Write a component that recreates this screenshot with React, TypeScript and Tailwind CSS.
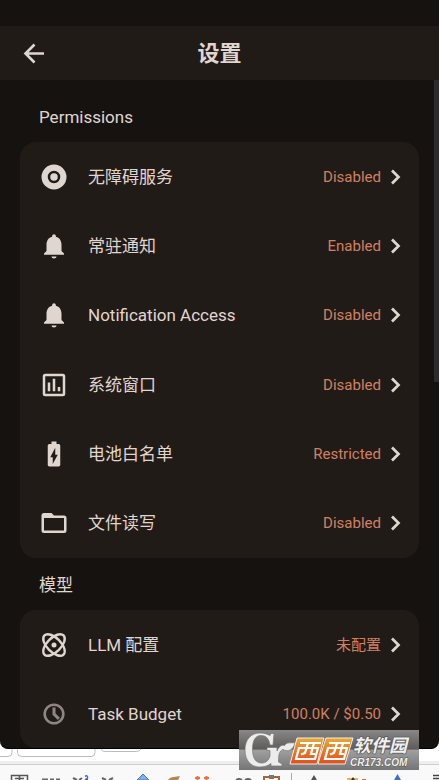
import type { ReactNode } from "react";

function Icon({ children, className = "" }: { children: ReactNode; className?: string }) {
  return (
    <svg viewBox="0 0 24 24" fill="currentColor" aria-hidden="true" className={"shrink-0 " + className}>
      {children}
    </svg>
  );
}

const target = (
  <Icon className="size-[30px]">
    <path
      fillRule="evenodd"
      d="M12 2a10 10 0 1 0 0 20a10 10 0 0 0 0-20zM12 7a5 5 0 1 1 0 10a5 5 0 0 1 0-10zM12 9a3 3 0 1 0 0 6a3 3 0 0 0 0-6z"
    />
  </Icon>
);
const bell = (
  <Icon className="size-[30px]">
    <path d="M12 22c1.100 0 2-.7 2-1.600h-4c0 .9.89 1.600 2 1.600zm6-6v-5c0-3.070-1.640-5.640-4.500-6.320V4c0-.83-.67-1.500-1.500-1.500s-1.500.67-1.500 1.500v.68C7.630 5.360 6 7.920 6 11v5l-2 2v1h16v-1l-2-2z" />
  </Icon>
);
const chart = (
  <Icon className="size-[30px]">
    <path d="M19 3H5a2 2 0 0 0-2 2v14a2 2 0 0 0 2 2h14a2 2 0 0 0 2-2V5a2 2 0 0 0-2-2zm0 16H5V5h14v14zM7 10h2v7H7zM11 7h2v10h-2zM15 13.500h2V17h-2z" />
  </Icon>
);
const battery = (
  <Icon className="size-[30px]">
    <path d="M15.670 4H14V2h-4v2H8.330C7.600 4 7 4.600 7 5.330v15.330C7 21.400 7.600 22 8.330 22h7.330c.74 0 1.340-.6 1.340-1.330V5.330C17 4.600 16.400 4 15.670 4zM11 20v-5.500H9L13 7v5.500h2L11 20z" />
  </Icon>
);
const folder = (
  <Icon className="size-[30px]">
    <path d="M20 6h-8l-2-2H4a2 2 0 0 0-2 2v12a2 2 0 0 0 2 2h16a2 2 0 0 0 2-2V8a2 2 0 0 0-2-2zm0 12H4V8h16v10z" />
  </Icon>
);
const atom = (
  <Icon className="size-[30px]">
    <g fill="none" stroke="currentColor" strokeWidth="1.900">
      <ellipse cx="12" cy="12" rx="10.800" ry="5.600" transform="rotate(45 12 12)" />
      <ellipse cx="12" cy="12" rx="10.800" ry="5.600" transform="rotate(-45 12 12)" />
    </g>
    <circle cx="12" cy="12" r="2" />
  </Icon>
);
const clock = (
  <Icon className="size-[26px] text-[#8d8683]">
    <circle cx="12" cy="12" r="8.600" fill="none" stroke="currentColor" strokeWidth="2.400" />
    <path d="M12 6V12l4.500 4.500" fill="none" stroke="currentColor" strokeWidth="2.800" />
  </Icon>
);

type Setting = { icon: ReactNode; label: string; value: string };

const permissions: Setting[] = [
  { icon: target, label: "无障碍服务", value: "Disabled" },
  { icon: bell, label: "常驻通知", value: "Enabled" },
  { icon: bell, label: "Notification Access", value: "Disabled" },
  { icon: chart, label: "系统窗口", value: "Disabled" },
  { icon: battery, label: "电池白名单", value: "Restricted" },
  { icon: folder, label: "文件读写", value: "Disabled" },
];

const models: Setting[] = [
  { icon: atom, label: "LLM 配置", value: "未配置" },
  { icon: clock, label: "Task Budget", value: "100.0K / $0.50" },
];

function SettingRow({ icon, label, value }: Setting) {
  return (
    <li className="flex">
      <button type="button" className="flex w-full items-center px-4 text-left">
        <span className="flex w-9 shrink-0 items-center justify-center">{icon}</span>
        <span className="ml-4 flex-1 text-[17px] leading-6">{label}</span>
        <span className="text-[15px] leading-5 text-[#d08060]">{value}</span>
        <svg viewBox="0 0 16 16" className="ml-1.5 size-4 shrink-0" fill="none" stroke="currentColor" strokeWidth="2.700" aria-hidden="true">
          <path d="M5 1.500L11.500 8L5 14.500" />
        </svg>
      </button>
    </li>
  );
}

function SettingCard({ items, className }: { items: Setting[]; className: string }) {
  return (
    <ul className={"mx-5 grid auto-rows-fr rounded-2xl bg-[#211b18] " + className}>
      {items.map((item) => (
        <SettingRow key={item.label} {...item} />
      ))}
    </ul>
  );
}

function Toolbar() {
  return (
    <svg className="block h-[31px] w-full" viewBox="0 0 439 31" preserveAspectRatio="xMinYMin slice" fill="none" aria-hidden="true">
      <rect width="439" height="31" fill="#fff" />
      <path d="M0 7.500H8q4 0 4-4V0M17.500 0V3.500q0 4 4 4H91q4 0 4-4V0M101 0q1 2.500 4 2.500H136q4 0 5-2.500" stroke="#bdbdbd" />
      <rect y="12" width="439" height="3" fill="#eeeeee" />
      <path d="M0 15.500H439" stroke="#d0d0d0" />
      <rect y="16" width="439" height="15" fill="#f9f9fa" />
      <path d="M11.500 31V26.500H27.500V31M19.500 27V31M15 29.500H24" stroke="#555" strokeWidth="1.500" />
      <path d="M42 30.500H48M50 30.500H54M56 30.500H60M73 29L77 31M82 29L79 31M102 29L106 31M113 29L109 31" stroke="#666" strokeWidth="2" />
      <path d="M85 27.500q1.500-1.500 2.500 0t-2.500 3h3" stroke="#4168b8" strokeWidth="1.300" />
      <path d="M137 31L143 25L149 31Z" fill="#80aee8" stroke="#4c78bd" />
      <path d="M168 31Q170 28 174 28L180 27L178 31Z" fill="#b4854b" />
      <path d="M195 29H200M204 29H209M197.500 27V31M206.500 27V31" stroke="#e07443" strokeWidth="2" />
      <path d="M236 31Q239 29 242 31M245 31Q248 29 251 31" stroke="#666" strokeWidth="2" />
      <path d="M264 31V28H279V31" stroke="#ac633a" strokeWidth="2" />
      <path d="M269 26H274V30H269Z" fill="#777" />
      <path d="M291.500 24V31" stroke="#a8a8a8" />
      <path d="M311 31L314 26L317 31Z" fill="#555" />
      <path d="M347 29H358V31H347Z" fill="#efb44d" />
      <path d="M351 31L353 28L355 31Z" fill="#333" />
      <path d="M362 30H366V31H362Z" fill="#e36a59" />
      <path d="M394 31L397.500 25L401 31Z" fill="#426fc1" />
      <path d="M433 26.500H439M433 29.500H439" stroke="#444" strokeWidth="1.500" />
    </svg>
  );
}

function Watermark() {
  return (
    <div className="absolute right-5 bottom-2.5 h-10 w-[180px]">
      <svg viewBox="0 0 180 40" className="size-full" aria-hidden="true">
        <defs>
          <linearGradient id="plate" x1="0" y1="0" x2="0" y2="1">
            <stop offset="0" stopColor="#898887" />
            <stop offset="0.48" stopColor="#5e5c5b" />
            <stop offset="0.5" stopColor="#a0a0a0" />
            <stop offset="1" stopColor="#757575" />
          </linearGradient>
          <linearGradient id="tile" x1="0" y1="0" x2="0" y2="1">
            <stop offset="0" stopColor="#e8aa35" />
            <stop offset="1" stopColor="#df4d20" />
          </linearGradient>
        </defs>
        <rect width="180" height="40" fill="url(#plate)" />
        <path
          d="M35 3.500L34 15H31C30 8.500 27 5.500 22 5.500C16 5.500 13.500 11 13.500 19C13.500 28 16.500 33 23 33C27 33 30 30 31 26V20.500H28V17.500H38V21C40 16.500 42.500 14.500 45.500 15.500C48 11.500 52 13.500 56 12.500C54.500 20 49 22.500 44 19.500C40 21 39.500 25 39.500 32L43 34V36H32V33.500C29 36 25 37 20.500 37C12 37 6 30.500 6 20C6 9.500 12 3 21 3C26 3 29 4.500 31 5.500L32 3.500Z"
          fill="#ececec"
          stroke="#777"
          strokeWidth="0.700"
        />
        <g stroke="#f2eee9" strokeWidth="1">
          <path d="M58 8H85L78 34H51L53 27Z" fill="url(#tile)" />
          <path d="M87 8H114L106 34H79L81 27Z" fill="url(#tile)" />
        </g>
        <g fill="none" stroke="#fff" strokeWidth="2.200">
          <path d="M61 13H82M60 18H79L76 29H57ZM69 13L66 23L62 24.500M75 13L72 24H76" />
          <path d="M90 13H111M89 18H108L105 29H86ZM98 13L95 23L91 24.500M104 13L101 24H105" />
        </g>
        <g fontStyle="italic" fontWeight="700" fill="#f0f0f0" stroke="#555" strokeWidth="1.500" strokeLinejoin="round" paintOrder="stroke">
          <text x="114" y="22" fontSize="18" fontFamily="Noto Sans CJK SC, sans-serif">
            软件园
          </text>
          <text x="111" y="36" fontSize="10" strokeWidth="1" fontFamily="Liberation Sans, sans-serif">
            CR173.COM
          </text>
        </g>
      </svg>
    </div>
  );
}

export default function App() {
  return (
    <div className="relative flex min-h-screen flex-col bg-white font-[Roboto,'Noto_Sans_CJK_SC',sans-serif] text-[#e0d6d0]">
      <main className="relative flex-1 rounded-b-lg border-b border-black bg-[#161210] pt-[26px]">
        <header className="grid h-[54px] grid-cols-[48px_1fr_48px] items-center bg-[#211b18]">
          <button type="button" aria-label="返回" className="flex justify-end pr-0.5">
            <svg viewBox="0 0 24 24" className="size-6" fill="none" stroke="currentColor" strokeWidth="2.600" aria-hidden="true">
              <path d="M22 12.500H4M12.500 3.500L3.500 12.500L12.500 21.500" />
            </svg>
          </button>
          <h1 className="pt-0.5 text-center text-[22px] leading-8 font-bold">设置</h1>
        </header>
        <div className="absolute top-20 right-0 h-[302px] w-[5px] bg-[#2d2b2e]" />
        <h2 className="mx-[39px] pt-[25px] pb-[13px] text-[17px] leading-6">Permissions</h2>
        <SettingCard items={permissions} className="min-h-[416px]" />
        <h2 className="mx-[39px] pt-[15px] pb-[13px] text-[17px] leading-6">模型</h2>
        <SettingCard items={models} className="min-h-[138px]" />
      </main>
      <Toolbar />
      <Watermark />
    </div>
  );
}
